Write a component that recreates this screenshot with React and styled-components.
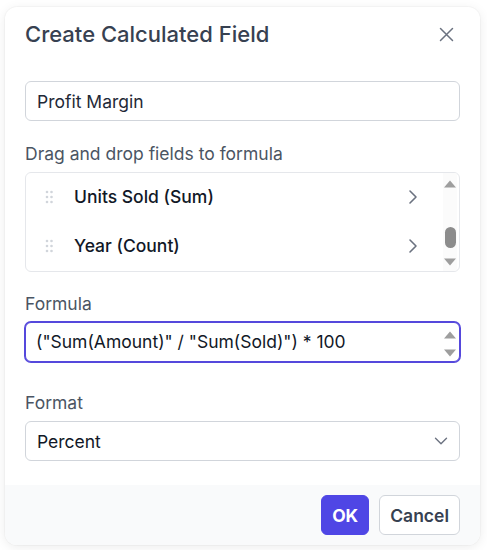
import { useEffect, useRef } from 'react'
import styled, { createGlobalStyle } from 'styled-components'
import { ChevronDown, ChevronRight } from 'lucide-react'

const GlobalStyle = createGlobalStyle`
  * {
    box-sizing: border-box;
  }
  body {
    margin: 0;
    background: #ffffff;
    font-family: Inter, "Noto Sans", sans-serif;
  }
`

const Page = styled.div`
  padding: 7px 7px 5px 5px;
`

const Card = styled.div`
  width: 475px;
  background: #ffffff;
  border-radius: 12px;
  overflow: hidden;
  box-shadow: 0 2px 12px rgba(0, 0, 0, 0.08), 0 0 0 1px rgba(0, 0, 0, 0.025);
`

const Header = styled.div`
  display: flex;
  align-items: center;
  justify-content: space-between;
  height: 54px;
  padding: 0 22px 0 20px;
`

const Title = styled.h2`
  margin: 0;
  font-size: 22px;
  line-height: 30px;
  font-weight: 500;
  color: #374151;
`

const CloseButton = styled.button`
  display: flex;
  align-items: center;
  justify-content: center;
  width: 24px;
  height: 24px;
  padding: 0;
  border: 0;
  background: transparent;
  color: #6b7280;
  cursor: pointer;
`

const Body = styled.div`
  padding: 20px 20px 24px;
`

const Field = styled.div`
  margin-top: ${(props) => props.$top || 0}px;
`

const Label = styled.div`
  font-size: 17.5px;
  line-height: 24px;
  color: #4b5563;
  margin-bottom: 6px;
`

const TextInput = styled.input`
  display: block;
  width: 100%;
  height: 40px;
  padding: 0 11px;
  border: 1px solid #d1d5db;
  border-radius: 6px;
  font-family: inherit;
  font-size: 17.5px;
  color: #1f2937;
  background: #fff;
  outline: none;
`

const FieldList = styled.div`
  display: flex;
  height: 100px;
  border: 1px solid #e5e7eb;
  border-radius: 6px;
  overflow: hidden;
  background: #fff;
`

const Viewport = styled.div`
  flex: 1;
  overflow: hidden;
`

const FieldRow = styled.div`
  display: flex;
  align-items: center;
  height: 49px;
  padding: 0 18px 0 19px;
  cursor: grab;
`

const FieldName = styled.span`
  flex: 1;
  margin-left: 21px;
  font-size: 17.5px;
  font-weight: 500;
  color: #111827;
`

const Arrow = styled.span`
  display: flex;
  color: #6b7280;
`

const ScrollBar = styled.div`
  flex: none;
  display: flex;
  flex-direction: column;
  align-items: center;
  justify-content: space-between;
  width: 14px;
  margin-right: ${(props) => props.$right}px;
  padding: ${(props) => props.$pad};
  background: ${(props) => (props.$track ? '#fbfbfb' : 'transparent')};
`

const Track = styled.div`
  flex: 1;
  display: flex;
  flex-direction: column;
  justify-content: flex-end;
  padding-bottom: 10px;
`

const Thumb = styled.div`
  width: 11px;
  height: 21px;
  border-radius: 6px;
  background: #8c8c8c;
`

const FormulaFrame = styled.div`
  display: flex;
  height: 40px;
  border: 1px solid #5548dc;
  box-shadow: 0 0 0 1px #5548dc;
  border-radius: 6px;
  background: #fff;
`

const FormulaBox = styled.textarea`
  flex: 1;
  display: block;
  min-width: 0;
  height: 100%;
  padding: 7px 0 7px 10px;
  border: 0;
  background: transparent;
  font-family: inherit;
  font-size: 17.5px;
  line-height: 24px;
  color: #111827;
  resize: none;
  overflow: hidden;
  outline: none;
  white-space: nowrap;
`

const SelectButton = styled.button`
  display: flex;
  align-items: center;
  justify-content: space-between;
  width: 100%;
  height: 40px;
  padding: 0 7px 0 11px;
  border: 1px solid #d1d5db;
  border-radius: 6px;
  background: #fff;
  font-family: inherit;
  font-size: 17.5px;
  color: #111827;
  cursor: pointer;
`

const Footer = styled.div`
  display: flex;
  justify-content: flex-end;
  gap: 10px;
  height: 60px;
  padding: 10px 20px;
  background: #f9fafb;
`

const Button = styled.button`
  height: 40px;
  padding: 0 10px;
  border-radius: 6px;
  border: 1px solid ${(props) => (props.$primary ? '#4f46e5' : '#d1d5db')};
  background: ${(props) => (props.$primary ? '#4f46e5' : '#ffffff')};
  color: ${(props) => (props.$primary ? '#ffffff' : '#374151')};
  font-family: inherit;
  font-size: 17.5px;
  font-weight: ${(props) => (props.$primary ? 700 : 600)};
  cursor: pointer;
`

const GripIcon = () => (
  <svg width="8" height="14" viewBox="0 0 8 14" fill="#d1d5db">
    {[2, 7, 12].map((cy) => (
      <g key={cy}>
        <circle cx="2" cy={cy} r="1.3" />
        <circle cx="6.5" cy={cy} r="1.3" />
      </g>
    ))}
  </svg>
)

const CloseIcon = () => (
  <svg width="15" height="15" viewBox="0 0 15 15" fill="none" stroke="currentColor" strokeWidth="1.5" strokeLinecap="round">
    <path d="M1.5 1.5l12 12M13.5 1.5l-12 12" />
  </svg>
)

const ScrollArrow = ({ down }) => (
  <svg width="12" height="8" viewBox="0 0 12 8" fill="#9e9e9e">
    <path d={down ? 'M0 0.5h12L6 7.5z' : 'M6 0.5L12 7.5H0z'} />
  </svg>
)

const fields = [
  'Amount (Sum)',
  'Region (Count)',
  'Product (Count)',
  'Units Sold (Sum)',
  'Year (Count)',
  'Month (Count)',
]

const App = () => {
  const listRef = useRef(null)

  useEffect(() => {
    if (listRef.current) listRef.current.scrollTop = 3 * 49 + 1
  }, [])

  return (
    <Page>
      <GlobalStyle />
      <Card>
        <Header>
          <Title>Create Calculated Field</Title>
          <CloseButton aria-label="Close">
            <CloseIcon />
          </CloseButton>
        </Header>
        <Body>
          <Field>
            <TextInput defaultValue="Profit Margin" />
          </Field>
          <Field $top={21}>
            <Label>Drag and drop fields to formula</Label>
            <FieldList>
              <Viewport ref={listRef}>
                {fields.map((name) => (
                  <FieldRow key={name}>
                    <GripIcon />
                    <FieldName>{name}</FieldName>
                    <Arrow>
                      <ChevronRight size={24} strokeWidth={1.6} />
                    </Arrow>
                  </FieldRow>
                ))}
              </Viewport>
              <ScrollBar $pad="7px 0 5px" $right={2} $track>
                <ScrollArrow />
                <Track>
                  <Thumb />
                </Track>
                <ScrollArrow down />
              </ScrollBar>
            </FieldList>
          </Field>
          <Field $top={20}>
            <Label>Formula</Label>
            <FormulaFrame>
              <FormulaBox defaultValue={'("Sum(Amount)" / "Sum(Sold)") * 100'} />
              <ScrollBar $pad="8px 0 4px" $right={2}>
                <ScrollArrow />
                <ScrollArrow down />
              </ScrollBar>
            </FormulaFrame>
          </Field>
          <Field $top={29}>
            <Label>Format</Label>
            <SelectButton>
              <span>Percent</span>
              <Arrow>
                <ChevronDown size={22} strokeWidth={1.5} />
              </Arrow>
            </SelectButton>
          </Field>
        </Body>
        <Footer>
          <Button $primary>OK</Button>
          <Button>Cancel</Button>
        </Footer>
      </Card>
    </Page>
  )
}

export default App
